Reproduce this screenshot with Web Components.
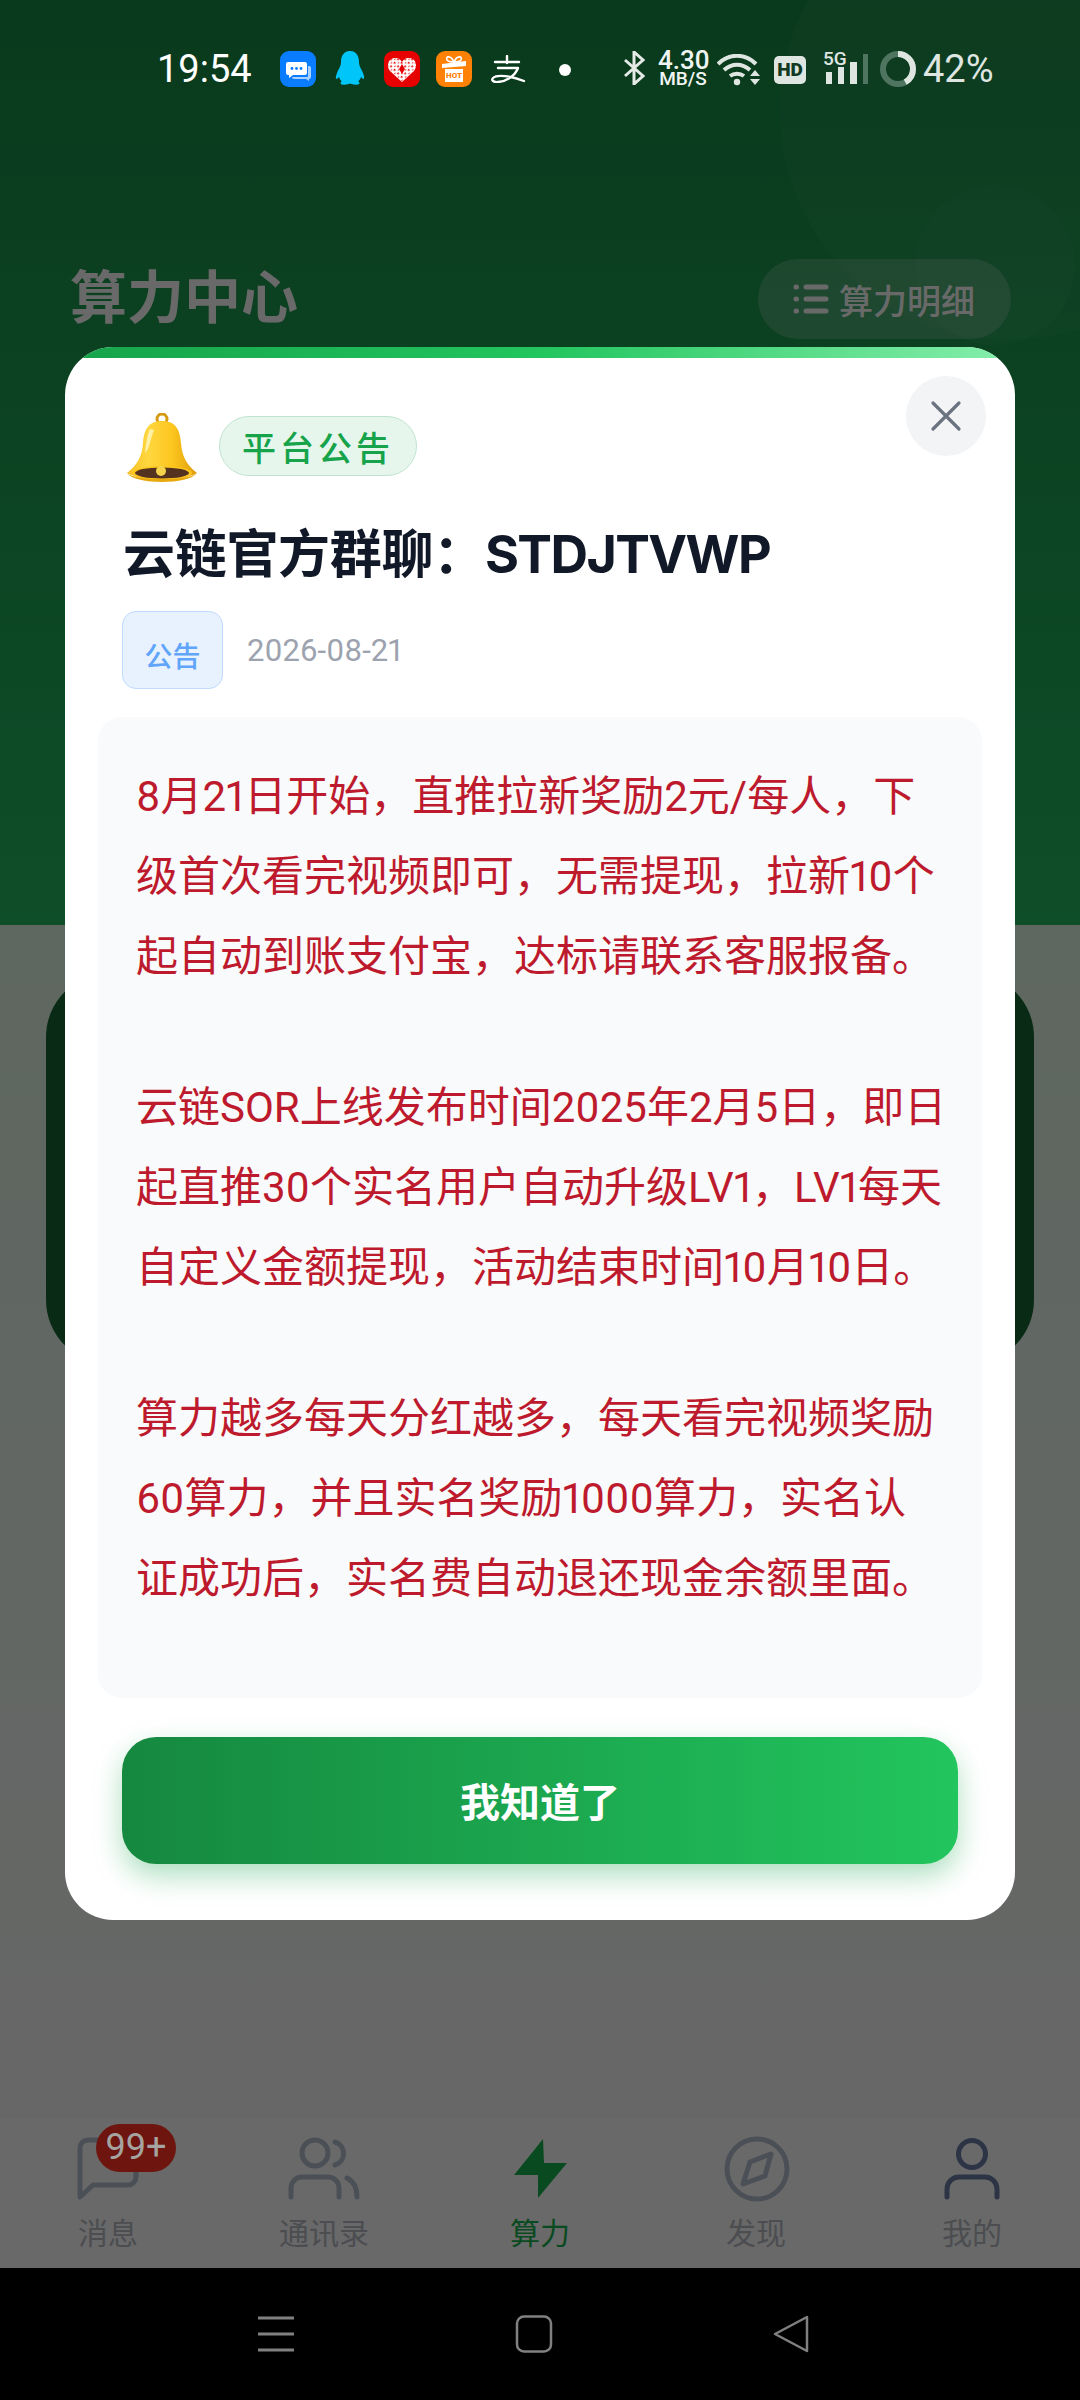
<!DOCTYPE html>
<html lang="zh">
<head>
<meta charset="utf-8">
<title>算力中心</title>
<style>
  html, body { margin: 0; padding: 0; background: #000; }
  body { width: 1080px; height: 2400px; overflow: hidden; font-family: Roboto, "Noto Sans CJK SC", sans-serif; }
</style>
</head>
<body>
<app-screen>
  <page-header title="算力中心" action="算力明细"></page-header>
  <power-card></power-card>
  <tab-bar></tab-bar>
  <sys-nav></sys-nav>
  <notice-modal slot="over" tag="平台公告" heading="云链官方群聊：STDJTVWP" kind="公告" date="2026-08-21" confirm="我知道了">
    <p>8月21日开始，直推拉新奖励2元/每人，下<br>级首次看完视频即可，无需提现，拉新10个<br>起自动到账支付宝，达标请联系客服报备。</p>
    <p>云链SOR上线发布时间2025年2月5日，即日<br>起直推30个实名用户自动升级LV1，LV1每天<br>自定义金额提现，活动结束时间10月10日。</p>
    <p>算力越多每天分红越多，每天看完视频奖励<br>60算力，并且实名奖励1000算力，实名认<br>证成功后，实名费自动退还现金余额里面。</p>
  </notice-modal>
  <status-bar slot="over"></status-bar>
</app-screen>

<script>
const FONT = 'Roboto, "Noto Sans CJK SC", sans-serif'

class AppScreen extends HTMLElement {
  constructor () {
    super()
    this.attachShadow({mode: 'open'}).innerHTML = `
    <style>
      :host { display: block; position: relative; width: 1080px; height: 2400px; overflow: hidden; }
      .page { display: flex; flex-direction: column; height: 100%;
        background: linear-gradient(180deg, #e4fbe9 925px, #f9f9f9 2118px); }
    </style>
    <div class="page"><slot></slot></div>
    <slot name="over"></slot>`
  }
}

class PageHeader extends HTMLElement {
  constructor () {
    super()
    this.attachShadow({mode: 'open'}).innerHTML = `
    <style>
      :host { display: block; position: relative; height: 925px; box-sizing: border-box; overflow: hidden;
        background: linear-gradient(180deg, #188c46, #23bd62); font-family: ${FONT}; }
      .row { display: flex; justify-content: space-between; align-items: center;
        padding: 259px 69px 0 70px; }
      h1 { margin: 0; font-size: 57px; font-weight: 700; color: #fff; line-height: 80px; }
      .btn { display: flex; align-items: center; gap: 10px; height: 80px; width: 253px; box-sizing: border-box;
        padding-left: 35px; border-radius: 40px; background: rgba(255,255,255,.2);
        color: #fff; font-size: 34px; font-weight: 500; }
      svg { width: 36px; height: 36px; }
      .blob { position: absolute; border-radius: 50%; background: rgba(255,255,255,.035); }
      .b1 { width: 460px; height: 460px; left: 780px; top: -120px; }
      .b2 { width: 160px; height: 160px; left: 915px; top: 185px; }
    </style>
    <div class="blob b1"></div><div class="blob b2"></div>
    <div class="row">
      <h1></h1>
      <div class="btn">
        <svg viewBox="0 0 36 36" fill="none" stroke="#fff" stroke-width="5" stroke-linecap="round">
          <path d="M3 6h.5M3 18h.5M3 30h.5M13 6h20M13 18h20M13 30h20"/>
        </svg>
        <span></span>
      </div>
    </div>`
    this.shadowRoot.querySelector('h1').textContent = this.getAttribute('title')
    this.shadowRoot.querySelector('span').textContent = this.getAttribute('action')
  }
}

class PowerCard extends HTMLElement {
  constructor () {
    super()
    this.attachShadow({mode: 'open'}).innerHTML = `
    <style>
      :host { display: block; flex: 1; padding: 48px 46px 0; }
      div { height: 391px; border-radius: 64px; background: #176a37; }
    </style>
    <div></div>`
  }
}

class TabBar extends HTMLElement {
  constructor () {
    super()
    const tabs = [
      ['消息', `<path d="M8 61V12a8 8 0 0 1 8-8H56a8 8 0 0 1 8 8V41a8 8 0 0 1-8 8H21z" stroke-linejoin="round"/>`],
      ['通讯录', `<circle cx="27" cy="17" r="13"/><path d="M47 6a12 12 0 0 1 0 23M3 61V52a11 11 0 0 1 11-11H40a11 11 0 0 1 11 11V61M59 42c6 3 10 9 10 19"/>`],
      ['算力', `<path d="M39 3 10 39H34V62L63 27H40z" fill="#1ab550" stroke="none"/>`],
      ['发现', `<circle cx="37" cy="33" r="30"/><path d="M51 18 45 40 23 48 30 26z" stroke-linejoin="round"/>`],
      ['我的', `<circle cx="36" cy="18" r="13.500" stroke="#6b7ea8"/><path d="M11 61V53a12 12 0 0 1 12-12H49a12 12 0 0 1 12 12V61" stroke="#6b7ea8"/>`]
    ]
    this.attachShadow({mode: 'open'}).innerHTML = `
    <style>
      :host { display: flex; height: 150px; flex: none; background: #fff; font-family: ${FONT}; }
      .tab { flex: 1; display: flex; flex-direction: column; align-items: center; padding-top: 18px; position: relative; }
      svg { width: 72px; height: 68px; display: block; }
      span { font-size: 30px; line-height: 36px; margin-top: 12px; color: #b8bcc4; }
      .on span { color: #1ab550; }
      .badge { position: absolute; z-index: 1; left: 96px; top: 6px; width: 80px; height: 48px; border-radius: 24px;
        background: #6e1510; color: #a5a4a0; font-size: 36px; line-height: 46px; text-align: center; margin: 0; }
    </style>
    ${tabs.map(([label, icon], i) => `
      <div class="tab ${i === 2 ? 'on' : ''}">
        <svg viewBox="0 0 72 68" fill="none" stroke="#b7c0d0" stroke-width="5" stroke-linecap="round">${icon}</svg>
        <span>${label}</span>
        ${i === 0 ? '<span class="badge">99+</span>' : ''}
      </div>`).join('')}`
  }
}

class SysNav extends HTMLElement {
  constructor () {
    super()
    this.attachShadow({mode: 'open'}).innerHTML = `
    <style>
      :host { display: flex; flex: none; height: 132px; background: #000; align-items: center;
        justify-content: center; gap: 220px; padding-right: 12px; }
      svg { width: 38px; height: 38px; display: block; }
    </style>
    <svg viewBox="0 0 38 38" fill="none" stroke="#808080" stroke-width="3"><path d="M1 3h36M1 19h36M1 35h36"/></svg>
    <svg viewBox="0 0 38 38" fill="none" stroke="#808080" stroke-width="2.500"><rect x="2" y="1.500" width="34" height="35" rx="7"/></svg>
    <svg viewBox="0 0 38 38" fill="none" stroke="#808080" stroke-width="2.500" stroke-linejoin="round"><path d="M34 2v34L2 19z"/></svg>`
  }
}

const noticeTemplate = document.createElement('template')
noticeTemplate.innerHTML = /* HTML */`
<style>
  :host { position: absolute; left: 0; top: 0; width: 1080px; height: 2268px; box-sizing: border-box;
    padding: 347px 65px 0; background: rgba(0,0,0,.59); font-family: ${FONT}; font-variant-numeric: proportional-nums; }
  .modal { position: relative; height: 1573px; box-sizing: border-box; background: #fff; border-radius: 48px;
    overflow: hidden; padding: 66px 33px 0; display: flex; flex-direction: column; }
  .bar { position: absolute; left: 0; top: 0; right: 0; height: 11px;
    background: linear-gradient(90deg, #16a34a, #22c55e 50%, #86efac); }
  .close { position: absolute; right: 29px; top: 29px; width: 80px; height: 80px; border-radius: 50%;
    background: #f3f4f6; display: flex; align-items: center; justify-content: center; }
  .close svg { width: 32px; height: 32px; }
  .top { display: flex; align-items: center; gap: 21px; padding-left: 28px; height: 70px; }
  .bell { width: 72px; height: 70px; display: block; }
  .tag { height: 60px; width: 198px; box-sizing: border-box; border: 1.5px solid #bfe3cf; border-radius: 30px;
    background: #e7f6ed; color: #16a34a; font-size: 34px; font-weight: 500; letter-spacing: 4px;
    display: flex; align-items: center; justify-content: center; margin-bottom: 4px; }
  h2 { margin: 36px 0 0 25px; font-family: Inter, "Noto Sans CJK SC", sans-serif; font-size: 52px;
    letter-spacing: -.3px; line-height: 72px; font-weight: 700; color: #111827; }
  h2 span { letter-spacing: -1.6px; }
  .meta { display: flex; align-items: center; gap: 24px; margin: 20px 0 0 24px; }
  .kind { width: 101px; height: 78px; box-sizing: border-box; border: 1.5px solid #bfdbfe; border-radius: 14px;
    background: #e8f2fe; color: #60a5fa; font-size: 28px; font-weight: 500; padding-top: 26px; text-align: center; line-height: 40px; }
  .date { font-size: 31px; color: #9ca3af; }
  .body { margin-top: 28px; height: 981px; box-sizing: border-box; background: #f9fafb; border-radius: 24px;
    padding: 40px 20px 0 38px; color: #be1a2d; font-size: 42px; line-height: 80px; white-space: nowrap; }
  .ok { margin: 39px 24px 0; height: 127px; flex: none; box-sizing: border-box; padding-bottom: 2px; border-radius: 34px;
    color: #fff; font-size: 40px; font-weight: 700;
    display: flex; align-items: center; justify-content: center;
    background: linear-gradient(90deg, #15883f, #22c55e);
    box-shadow: 0 12px 28px rgba(22,163,74,.35); }
  ::slotted(p) { margin: 0 0 71px; }
</style>
<div class="modal">
  <div class="bar"></div>
  <div class="close">
    <svg viewBox="0 0 32 32" fill="none" stroke="#6b7280" stroke-width="3.200" stroke-linecap="round"><path d="M3 3l26 26M29 3 3 29"/></svg>
  </div>
  <div class="top">
    <svg class="bell" viewBox="0 0 72 70">
      <defs>
        <linearGradient id="bg" x1="0" x2="1" y1="0" y2="0">
          <stop offset="0" stop-color="#f6bf26"/><stop offset=".3" stop-color="#ffd740"/><stop offset=".65" stop-color="#fdc61e"/><stop offset="1" stop-color="#dc9c0c"/>
        </linearGradient>
      </defs>
      <circle cx="36" cy="6" r="5" fill="none" stroke="#d69a10" stroke-width="3"/>
      <path d="M36 8c-14 0-18 9-19 22-1 14-6 22-16 30 8 7 62 7 70 0-10-8-15-16-16-30-1-13-5-22-19-22z" fill="url(#bg)"/>
      <path d="M24 16c-3 6-4 16-5 24 4-3 6-16 9-23z" fill="#fff2a8"/>
      <ellipse cx="36" cy="60" rx="30" ry="7" fill="#fdc61e"/>
      <ellipse cx="36" cy="60" rx="27" ry="5.500" fill="#53321f"/>
      <circle cx="35" cy="58" r="5" fill="#f6d34a"/>
      <path d="M1 60c8 12 62 12 70 0-8 8-62 8-70 0z" fill="#e8a90f"/>
    </svg>
    <div class="tag"></div>
  </div>
  <h2></h2>
  <div class="meta"><div class="kind"></div><div class="date"></div></div>
  <div class="body"><slot></slot></div>
  <div class="ok"></div>
</div>
`
class NoticeModal extends HTMLElement {
  constructor () {
    super()
    this.attachShadow({mode: 'open'})
    this.shadowRoot.appendChild(noticeTemplate.content.cloneNode(true))
    const set = (sel, attr) => { this.shadowRoot.querySelector(sel).textContent = this.getAttribute(attr) }
    set('.tag', 'tag')
    set('.kind', 'kind')
    set('.date', 'date')
    set('.ok', 'confirm')
    // latin part of the heading is tighter than the chinese part
    this.shadowRoot.querySelector('h2').innerHTML =
      this.getAttribute('heading').replace(/[A-Z]+/, m => `<span>${m}</span>`)
  }
}

class StatusBar extends HTMLElement {
  constructor () {
    super()
    this.attachShadow({mode: 'open'}).innerHTML = `
    <style>
      :host { position: absolute; left: 0; top: 0; width: 1080px; height: 138px; box-sizing: border-box;
        display: flex; align-items: flex-start; padding: 51px 0 0 157px;
        font-family: Roboto, "Noto Sans CJK SC", sans-serif; color: #fff; }
      .time { width: 123px; height: 36px; font-size: 38px; line-height: 36px; font-weight: 400; flex: none; }
      svg { display: block; flex: none; }
      .gift { position: relative; width: 36px; height: 36px; margin-right: 18px; flex: none; }
      .gift span { position: absolute; left: 9px; right: 9px; top: 19px; text-align: center; font-size: 8px; line-height: 11px;
        font-weight: 900; color: #ff8206; }
      .dot { width: 12px; height: 12px; border-radius: 50%; background: #fff; margin: 13px 52px 0 0; flex: none; }
      .speed { width: 50px; margin: 0 9px 0 13px; text-align: center; flex: none; color: #f1f5f2; }
      .speed b { display: block; font-size: 26px; line-height: 19px; font-weight: 500; }
      .speed i { display: block; font-style: normal; font-size: 19px; line-height: 17px; font-weight: 500; }
      .hd { width: 32px; height: 28px; margin: 5px 20px 0 13px; border-radius: 5px; background: #dfe6e1; color: #123a22;
        font-size: 19px; line-height: 28px; font-weight: 900; text-align: center; flex: none; }
      .g5 { position: absolute; left: 823px; top: 50px; font-size: 19px; line-height: 17px; font-weight: 500; color: #dfe6e1; }
      .pct { font-size: 38px; line-height: 36px; margin-left: 7px; color: #dfe6e1; }
    </style>
    <div class="time">19:54</div>
    <svg width="36" height="36" viewBox="0 0 36 36" style="margin-right:19px">
      <rect width="36" height="36" rx="9" fill="#0a7cff"/>
      <path d="M8 11h17a2 2 0 0 1 2 2v9a2 2 0 0 1-2 2H13l-4 3v-3H8a2 2 0 0 1-2-2v-9a2 2 0 0 1 2-2z" fill="#fff"/>
      <path d="M28 15h1a2 2 0 0 1 2 2v9a2 2 0 0 1-2 2v2l-3-2H14a2 2 0 0 1-2-2h15a1 1 0 0 0 1-1z" fill="#a9d0ff"/>
      <circle cx="12" cy="17.500" r="1.400" fill="#0a7cff"/><circle cx="16.500" cy="17.500" r="1.400" fill="#0a7cff"/><circle cx="21" cy="17.500" r="1.400" fill="#0a7cff"/>
    </svg>
    <svg width="30" height="35" viewBox="0 0 30 35" style="margin-right:19px">
      <path d="M15 0C8 0 6 6 6 11c0 4-2 6-4 11-1 3-2 6 0 6l2-2c.5 2 2 4 3 4-2 1-2 3 0 3.500 3 .5 6 0 8-1 2 1 5 1.500 8 1 2-.5 2-2.500 0-3.500 1 0 2.500-2 3-4l2 2c2 0 1-3 0-6-2-5-4-7-4-11 0-5-2-11-9-11z" fill="#00c5f8"/>
    </svg>
    <svg width="36" height="36" viewBox="0 0 36 36" style="margin-right:16px">
      <defs>
        <pattern id="qr" width="5" height="5" patternUnits="userSpaceOnUse" patternTransform="rotate(45)">
          <rect x="0" y="0" width="1.700" height="1.700" fill="#e60000"/><rect x="3" y="2.500" width="1.200" height="1.200" fill="#e60000"/>
        </pattern>
      </defs>
      <rect width="36" height="36" rx="9" fill="#e60000"/>
      <path d="M18 31 6 20c-4-5-2-12 4-13 4-.5 6 1 8 4 2-3 4-4.500 8-4 6 1 8 8 4 13z" fill="#fff"/>
      <path d="M18 31 6 20c-4-5-2-12 4-13 4-.5 6 1 8 4 2-3 4-4.500 8-4 6 1 8 8 4 13z" fill="url(#qr)"/>
      <path d="M18 13l3 5-3 5-3-5z" fill="#e60000"/>
    </svg>
    <div class="gift">
      <svg width="36" height="36" viewBox="0 0 36 36">
        <rect width="36" height="36" rx="9" fill="#ff8206"/>
        <path d="M18 11C15 4 9 5 11 9c1 1.500 4 2 7 2 3 0 6-.5 7-2 2-4-4-5-7 2z" fill="none" stroke="#fff" stroke-width="1.600"/>
        <path d="M6 13 30 10v5L6 17z" fill="#fff"/>
        <path d="M9 18h18v13H9z" fill="#fff"/>
      </svg>
      <span>HOT</span>
    </div>
    <svg width="36" height="28" viewBox="0 0 36 28" style="margin:4px 33px 0 0" fill="none" stroke="#fff" stroke-width="2.400" stroke-linecap="round" stroke-linejoin="round">
      <path d="M17 1v7M5 7h24M8 13h20c-3 8-11 13-20 14-5 .5-7-2-5-4 4-4 18-2 31 3"/>
    </svg>
    <div class="dot"></div>
    <svg width="22" height="34" viewBox="0 0 22 34" fill="none" stroke="#e4eae6" stroke-width="3"><path d="M2 9l18 16-9 8V1l9 8L2 25"/></svg>
    <div class="speed"><b>4.30</b><i>MB/S</i></div>
    <svg width="44" height="32" viewBox="0 0 44 32" style="margin-top:3px" fill="none" stroke="#dfe6e1" stroke-width="4">
      <path d="M1 10c11-11 27-11 38 0M7 16c8-7 18-7 26 0M13 22c4-3 10-3 14 0"/>
      <circle cx="20" cy="28" r="3.200" fill="#dfe6e1" stroke="none"/>
      <path d="M33 22l5-6 5 6zM33 25h10l-5 6z" fill="#dfe6e1" stroke="none"/>
    </svg>
    <div class="hd">HD</div>
    <div class="g5">5G</div>
    <svg width="44" height="30" viewBox="0 0 44 30" style="margin:3px 10px 0 0">
      <rect x="0" y="18" width="6" height="12" fill="#dfe6e1"/><rect x="12" y="13" width="6" height="17" fill="#dfe6e1"/>
      <rect x="24" y="8" width="7" height="22" fill="#dfe6e1"/><rect x="37" y="0" width="5" height="30" fill="#4f7560"/>
    </svg>
    <svg width="36" height="36" viewBox="0 0 36 36" fill="none" stroke-width="6">
      <circle cx="18" cy="18" r="15" stroke="#4f7560"/>
      <circle cx="18" cy="18" r="15" stroke="#dfe6e1" pathLength="100" stroke-dasharray="42 58" transform="rotate(-90 18 18)"/>
    </svg>
    <div class="pct">42%</div>`
  }
}

customElements.define('app-screen', AppScreen)
customElements.define('page-header', PageHeader)
customElements.define('power-card', PowerCard)
customElements.define('tab-bar', TabBar)
customElements.define('sys-nav', SysNav)
customElements.define('notice-modal', NoticeModal)
customElements.define('status-bar', StatusBar)
</script>
</body>
</html>
